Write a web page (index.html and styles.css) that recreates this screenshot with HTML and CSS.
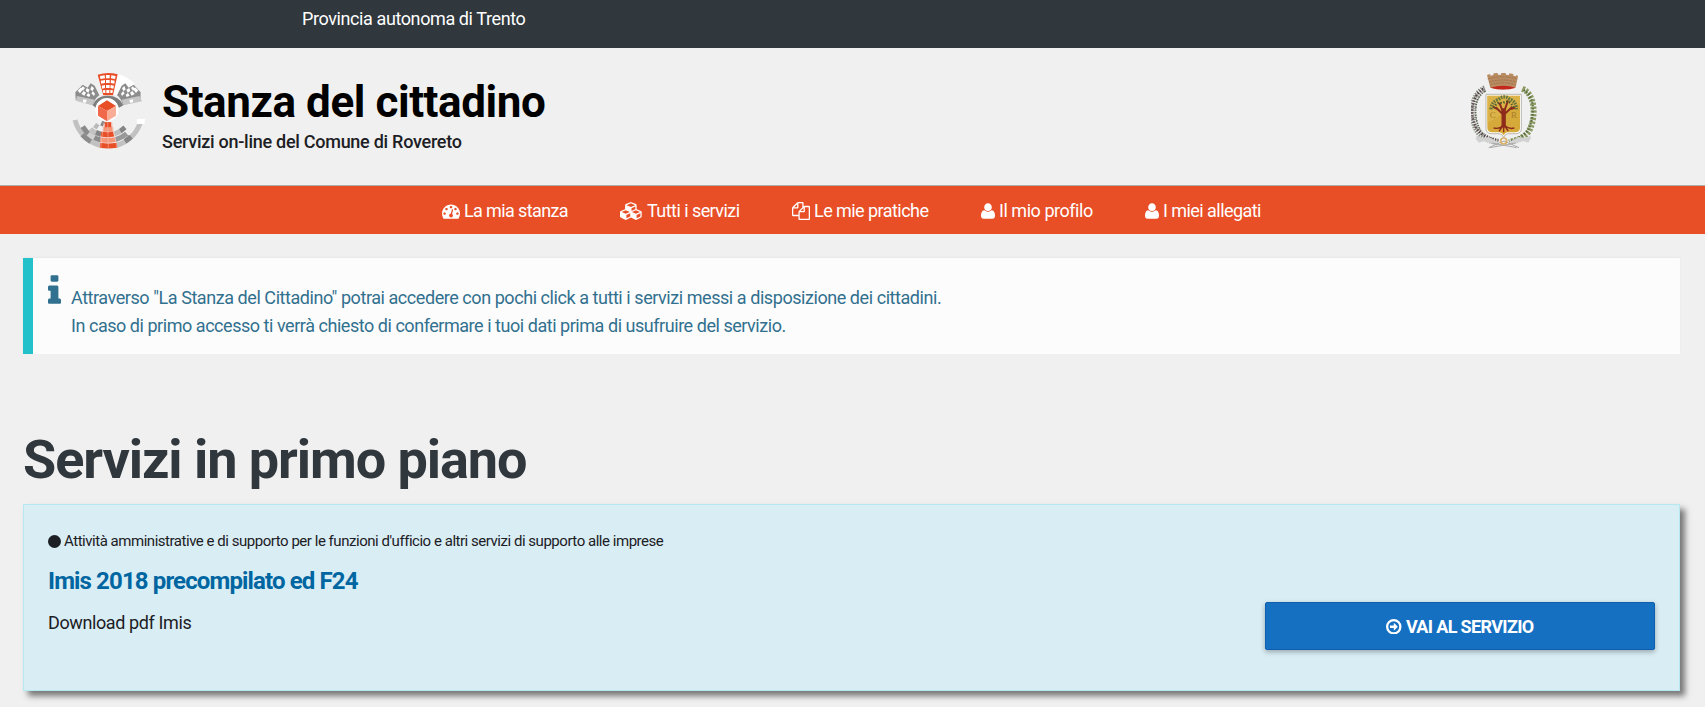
FILE: index.html
```html
<!DOCTYPE html>
<html lang="it">
<head>
<meta charset="utf-8">
<title>Stanza del cittadino</title>
<link rel="stylesheet" href="styles.css">
</head>
<body>
<div class="topbar"><span>Provincia autonoma di Trento</span></div>
<header class="header">
  <svg class="logo" viewBox="36 36 222 234">
    <path d="M171 42A112 112 0 0 1 225 72L182 110L158 103Z" fill="#fff"/>
    <path d="M113 44Q143 35 173 43L159 106H130Z" fill="#e84f27"/>
    <g fill="#fff"><path d="M120 48l14-2 1 9-14 2zM138 45h11v10h-11zM154 46l13 2-2 9-12-2zM122 62l13-2v9l-11 2zM138 60h11v9h-11zM153 60l11 2-1 9-11-2zM125 77l10-2v9l-8 2zM138 75h11v9h-11zM152 75l10 2-2 9-9-2zM128 91l8-1v9h-6zM139 90h9v9h-9zM151 90l8 1-2 8h-6z"/></g>
    <path d="M46 97L68 74L83 83L92 70L104 77L118 106Q104 116 98 135L47 120Z" fill="#8c8c8c"/>
    <path d="M242 97L221 74L206 83L196 70L185 77L171 106Q184 116 189 135L241 120Z" fill="#8c8c8c"/>
    <path d="M51 108L104 119L97 136L47 122Z" fill="#c5c5c5"/><path d="M238 108L185 119L191 136L246 124Z" fill="#c5c5c5"/>
    <g fill="#fff"><path d="M53 92l10-10 5 7-8 11zM68 79l7 5-6 8-5-6zM64 102l7-9 7 5-5 9zM80 84l9 5-4 9-8-5zM79 107l5-8 7 5-3 7zM95 78l7 7-5 9-6-6zM94 100l5-6 6 7-3 7zM70 118l10 2-3 9-9-3z"/>
    <path d="M235 91l-10-9-5 7 8 10zM219 79l-6 5 6 8 5-6zM224 102l-7-9-7 5 5 9zM208 84l-9 5 4 9 8-5zM209 107l-5-8-7 5 3 7zM193 78l-7 7 5 9 6-6zM194 100l-5-6-6 7 3 7zM218 118l-10 2 3 9 9-3z"/></g>
    <path d="M98 136Q108 107 143 107T190 136L177 143Q164 116 141 116T108 144Z" fill="#7d7d7d"/>
    <circle cx="141" cy="149" r="35" fill="#fff"/>
    <g fill="none" stroke-width="15">
      <path d="M45 180A106 106 0 0 0 120 256" stroke="#c1c1c1"/>
      <path d="M67 224A106 106 0 0 0 92 245" stroke="#8b8b8b"/>
      <path d="M170 256A106 106 0 0 0 240 190" stroke="#c1c1c1"/>
      <path d="M195 244A106 106 0 0 0 213 230" stroke="#858585"/>
      <path d="M120 256Q145 260 171 256" stroke="#e84f27"/>
      <path d="M68 200A90 90 0 0 0 121 240" stroke="#8b8b8b"/><path d="M85 221A90 90 0 0 0 103 233" stroke="#d1d1d1"/>
      <path d="M121 239Q145 243 166 239" stroke="#f69679"/><path d="M167 239A90 90 0 0 0 200 221" stroke="#999"/>
      <path d="M91 207Q104 221 122 224" stroke="#c2c2c2"/><path d="M108 217l15 6M180 214l15-12" stroke="#858585"/>
      <path d="M123 222Q143 226 161 222" stroke="#e84f27"/><path d="M163 222l18-8" stroke="#bcbcbc"/>
      <path d="M104 195l10 7" stroke="#b8b8b8"/><path d="M124 189l8 4" stroke="#858585"/><path d="M130 208h28" stroke="#f69679"/><path d="M134 194h20" stroke="#e84f27"/>
    </g>
    <path d="M231 177h24l-2 15h-22z" fill="#fff"/>
    <path d="M131 188l-9 78M156 188l15 77M143 188l2 78" stroke="#f3c5b9" stroke-width="1.5"/>
    <path d="M114 138L141 121L168 138L141 153Z" fill="#e84f27"/><path d="M114 138L141 153V184L114 167Z" fill="#f0694a"/><path d="M168 138L141 153V184L168 167Z" fill="#f9ad97"/>
  </svg>
  <div class="brand">
    <div class="brand-title">Stanza del cittadino</div>
    <div class="brand-sub">Servizi on-line del Comune di Rovereto</div>
  </div>
  <svg class="crest" viewBox="63 36 201 234">
    <path d="M111 45l9-3 2 5 8-2 1-5 12-1 1 5h9l1-5h13l1 5 9 1 1-5 12 2v5l8 2 1-4 5 3-7 34Q160 94 121 83Z" fill="#b98b61"/>
    <path d="M113 57Q157 44 203 57M117 66Q158 54 199 66M121 74Q160 63 196 74" fill="none" stroke="#8e6747" stroke-width="2" stroke-dasharray="6 3"/>
    <path d="M121 83Q160 72 198 83Q160 94 121 83Z" fill="#c4281d"/>
    <path d="M108 103H214V207Q213 220 197 221H173Q164 223 161 232Q157 222 148 221H124Q109 220 108 207Z" fill="#fff" stroke="#9b9689" stroke-width="2"/>
    <path d="M112 107H210V205Q209 217 195 217H172Q165 218 161 226Q157 218 149 217H126Q113 216 112 205Z" fill="#d5a93a"/>
    <path d="M112 107H210V130L112 190Z" fill="#dfba52" opacity=".6"/>
    <g fill="none" stroke="#8e2c1c"><path d="M161 145V203" stroke-width="13"/><path d="M161 165L137 142M163 163L187 140M159 156L148 128M164 150L174 122M141 147L128 139M181 147L196 143" stroke-width="6"/><path d="M159 196Q149 208 131 204M163 196Q176 209 193 204M156 201L147 214M161 200V217M166 201L175 213" stroke-width="4"/></g>
    <g fill="none" stroke="#66733a" stroke-width="10" stroke-dasharray="5 3"><path d="M123 148Q124 125 145 119Q163 103 179 118Q198 122 199 148"/></g>
    <g fill="none" stroke="#46562e" stroke-width="7" stroke-dasharray="4 5"><path d="M132 144Q139 124 157 130Q178 115 190 142"/></g>
    <text x="119" y="174" class="crest-letter">C</text><text x="183" y="174" class="crest-letter">R</text>
    <g fill="none"><path d="M105 86C62 104 60 175 84 214Q100 238 145 246" stroke="#8b9083" stroke-width="20" stroke-dasharray="4 3"/><path d="M100 87C60 110 60 172 80 206Q100 233 145 242" stroke="#57434d" stroke-width="8" stroke-dasharray="4 5"/><path d="M105 94C70 112 70 175 92 212" stroke="#4f5a48" stroke-width="5" stroke-dasharray="3 5"/><path d="M100 96C65 115 66 172 87 211" stroke="#eee3e5" stroke-width="4" stroke-dasharray="2 6"/>
    <path d="M217 86C258 104 258 175 237 213Q221 237 177 246" stroke="#8b9a62" stroke-width="18" stroke-dasharray="7 4"/><path d="M221 91C258 110 254 175 232 214Q211 237 177 244" stroke="#56683b" stroke-width="7" stroke-dasharray="4 5"/></g>
    <path d="M80 227l18 7 18-3 30 16-8 8-35-12-16 5-10-12zM242 227l-18 7-18-3-30 16 8 8 35-12 16 5 7-12z" fill="#d2d2d3"/>
    <path d="M116 263L162 243L207 263M125 249L200 263M196 249L120 263" fill="none" stroke="#aaa" stroke-width="3"/>
    <circle cx="161" cy="243" r="9" fill="none" stroke="#d8b064" stroke-width="5"/>
  </svg>
</header>
<nav class="nav">
  <a class="n1"><svg class="fa w18" viewBox="0 0 1792 1792"><path d="M384 1152q0-53-37.5-90.5t-90.5-37.5-90.5 37.5-37.5 90.5 37.5 90.5 90.5 37.5 90.5-37.5 37.5-90.5zm192-448q0-53-37.5-90.5t-90.5-37.5-90.5 37.5-37.5 90.5 37.5 90.5 90.5 37.5 90.5-37.5 37.5-90.5zm428 481l101-382q6-26-7.5-48.5t-38.5-29.5-48 6.5-30 39.5l-101 382q-60 5-107 43.5t-63 98.5q-20 77 20 146t117 89 146-20 89-117q16-60-6-117t-72-91zm660-33q0-53-37.5-90.5t-90.5-37.5-90.5 37.5-37.5 90.5 37.5 90.5 90.5 37.5 90.5-37.5 37.5-90.5zm-640-640q0-53-37.5-90.5t-90.5-37.5-90.5 37.5-37.5 90.5 37.5 90.5 90.5 37.5 90.5-37.5 37.5-90.5zm448 192q0-53-37.5-90.5t-90.5-37.5-90.5 37.5-37.5 90.5 37.5 90.5 90.5 37.5 90.5-37.5 37.5-90.5zm320 448q0 261-141 483-19 29-54 29h-1402q-35 0-54-29-141-221-141-483 0-182 71-348t191-286 286-191 348-71 348 71 286 191 191 286 71 348z"/></svg><span>La mia stanza</span></a>
  <a class="n2"><svg class="fa w23" viewBox="0 0 2304 1792"><path d="M640 1632l384-192v-314l-384 164v342zm-64-454l404-173-404-173-404 173zm1088 454l384-192v-314l-384 164v342zm-64-454l404-173-404-173-404 173zm-448-293l384-165v-266l-384 164v267zm-64-379l441-189-441-189-441 189zm1088 518v416q0 36-19 67t-52 47l-448 224q-25 14-57 14t-57-14l-448-224q-4-2-7-4-2 2-7 4l-448 224q-25 14-57 14t-57-14l-448-224q-33-16-52-47t-19-67v-416q0-38 21.5-70t56.5-48l434-186v-400q0-38 21.5-70t56.5-48l448-192q23-10 50-10t50 10l448 192q35 16 56.5 48t21.5 70v400l434 186q36 16 57 48t21 70z"/></svg><span>Tutti i servizi</span></a>
  <a class="n3"><svg class="fa w18" viewBox="0 0 1792 1792"><path d="M1696 384q40 0 68 28t28 68v1216q0 40-28 68t-68 28h-960q-40 0-68-28t-28-68v-288h-544q-40 0-68-28t-28-68v-672q0-40 20-88t48-76l408-408q28-28 76-48t88-20h416q40 0 68 28t28 68v328q68-40 128-40h416zm-544 213l-299 299h299v-299zm-640-384l-299 299h299v-299zm196 647l316-316v-416h-384v416q0 40-28 68t-68 28h-416v640h512v-256q0-40 20-88t48-76zm956 804v-1152h-384v416q0 40-28 68t-68 28h-416v640h896z"/></svg><span>Le mie pratiche</span></a>
  <a class="n4"><svg class="fa w14" viewBox="192 0 1408 1792"><path d="M1600 1405q0 120-73 189.5t-194 69.5h-874q-121 0-194-69.5t-73-189.5q0-53 3.5-103.5t14-109 26.5-108.5 43-97.5 62-81 85.5-53.5 111.5-20q9 0 42 21.5t74.5 48 108 48 133.5 21.5 133.5-21.5 108-48 74.5-48 42-21.5q61 0 111.5 20t85.5 53.5 62 81 43 97.5 26.5 108.5 14 109 3.5 103.5zm-320-893q0 159-112.5 271.5t-271.5 112.5-271.5-112.5-112.5-271.5 112.5-271.5 271.5-112.5 271.5 112.5 112.5 271.5z"/></svg><span>Il mio profilo</span></a>
  <a class="n5"><svg class="fa w14" viewBox="192 0 1408 1792"><path d="M1600 1405q0 120-73 189.5t-194 69.5h-874q-121 0-194-69.5t-73-189.5q0-53 3.5-103.5t14-109 26.5-108.5 43-97.5 62-81 85.5-53.5 111.5-20q9 0 42 21.5t74.5 48 108 48 133.5 21.5 133.5-21.5 108-48 74.5-48 42-21.5q61 0 111.5 20t85.5 53.5 62 81 43 97.5 26.5 108.5 14 109 3.5 103.5zm-320-893q0 159-112.5 271.5t-271.5 112.5-271.5-112.5-112.5-271.5 112.5-271.5 271.5-112.5 271.5 112.5 112.5 271.5z"/></svg><span>I miei allegati</span></a>
</nav>
<main class="main">
  <div class="alert">
    <svg class="info" viewBox="576 128 640 1408"><path d="M1216 1344v128q0 26-19 45t-45 19h-512q-26 0-45-19t-19-45v-128q0-26 19-45t45-19h64v-384h-64q-26 0-45-19t-19-45v-128q0-26 19-45t45-19h384q26 0 45 19t19 45v576h64q26 0 45 19t19 45zm-128-1152v192q0 26-19 45t-45 19h-256q-26 0-45-19t-19-45v-192q0-26 19-45t45-19h256q26 0 45 19t19 45z"/></svg>
    <p class="alert-text"><span class="l1">Attraverso "La Stanza del Cittadino" potrai accedere con pochi click a tutti i servizi messi a disposizione dei cittadini.</span><br><span class="l2">In caso di primo accesso ti verrà chiesto di confermare i tuoi dati prima di usufruire del servizio.</span></p>
  </div>
  <h1 class="heading"><span>Servizi in primo piano</span></h1>
  <section class="card">
    <div class="card-body">
      <div class="category"><i class="dot"></i><span>Attività amministrative e di supporto per le funzioni d'ufficio e altri servizi di supporto alle imprese</span></div>
      <h2 class="card-title"><span>Imis 2018 precompilato ed F24</span></h2>
      <p class="card-desc"><span>Download pdf Imis</span></p>
    </div>
    <a class="button"><svg class="arrow" viewBox="128 128 1536 1536"><path fill-rule="evenodd" d="M1285 896q0 14-9 23l-320 320q-9 9-23 9-13 0-22.500-9.500t-9.500-22.500v-192h-352q-13 0-22.500-9.500t-9.500-22.500v-192q0-13 9.500-22.500t22.500-9.500h352v-192q0-14 9-23t23-9q12 0 24 10l319 319q9 9 9 23zM1440 896A544 544 0 1 0 352 896A544 544 0 1 0 1440 896zM1664 896A768 768 0 1 1 128 896A768 768 0 1 1 1664 896z"/></svg><span>VAI AL SERVIZIO</span></a>
  </section>
</main>
</body>
</html>
```
FILE: styles.css
```css
* { box-sizing: border-box; }
body { margin: 0; height: 707px; overflow: hidden; background: #f0f0f0; color: #1c2024; font: 18px/28px Roboto, "Liberation Sans", sans-serif; white-space: nowrap; }
.topbar { height: 48px; padding: 5px 0 0 302px; background: #30373d; color: #fff; letter-spacing: -.4px; }
.header { height: 138px; display: flex; align-items: flex-start; padding: 24px 167px 0 72px; border-bottom: 1px solid #b0aeab; }
.logo { width: 74px; height: 78px; }
.brand { margin-left: 16px; flex: 1; padding-top: 2px; }
.brand-title { font-size: 44px; line-height: 56px; font-weight: 700; color: #000; letter-spacing: -.43px; }
.brand-sub { font-weight: 500; line-height: 24px; letter-spacing: -.27px; }
.crest { width: 67px; height: 78px; }
.crest-letter { font: 27px "Liberation Serif", serif; fill: #a9802c; }
.nav { height: 48px; background: #e84f27; color: #fff; display: flex; padding-left: 442px; }
.nav a { display: flex; padding-top: 11px; letter-spacing: -.55px; }
.fa { height: 18px; margin: 5px 4px 0 0; fill: #fff; }
.w18 { width: 18px; }
.w23 { width: 23px; }
.w14 { width: 14px; }
.nav .n1 { width: 178px; letter-spacing: -.62px; }
.n2 { width: 172px; }
.n3 { width: 189px; }
.nav .n4 { width: 164px; letter-spacing: -.46px; }
.main { padding: 24px 25px 0 23px; }
.alert { height: 96px; display: flex; align-items: flex-start; background: #fcfcfc; border-left: 10px solid #25c1cb; box-shadow: 0 -1px 2px rgba(0,0,0,.04); padding: 17px 15px 0; color: #31708f; }
.info { width: 13px; height: 29px; fill: #31708f; margin-right: 10px; }
.alert-text { margin: 9px 0 0; }
.l1 { letter-spacing: -.44px; }
.l2 { letter-spacing: -.46px; }
.heading { margin: 70px 0 0; font-size: 54px; line-height: 72px; color: #30373d; letter-spacing: -1.07px; }
.card { height: 187px; margin: 8px 0 0; display: flex; justify-content: space-between; background: #d9edf5; border: 1px solid #b5e8f0; box-shadow: 5px 5px 6px rgba(0,0,0,.5); padding: 22px 24px 0 24px; }
.category { display: flex; align-items: center; font-size: 15px; line-height: 28px; letter-spacing: -.47px; }
.dot { width: 13px; height: 13px; border-radius: 50%; background: #1c2024; margin-right: 3px; }
.card-title { margin: 10px 0 0; font-size: 24px; line-height: 32px; color: #0066a1; letter-spacing: -.87px; }
.card-desc { margin: 12px 0 0; letter-spacing: -.39px; }
.button { width: 390px; height: 48px; margin-top: 75px; padding-top: 1px; display: flex; align-items: center; justify-content: center; background: #1670c2; border: 1px solid #0f5fae; border-radius: 2px; box-shadow: 0 2px 5px rgba(0,0,0,.3); color: #fff; font-weight: 700; letter-spacing: -.65px; }
.arrow { width: 15.500px; height: 15.500px; fill: #fff; margin-right: 4px; }
```
